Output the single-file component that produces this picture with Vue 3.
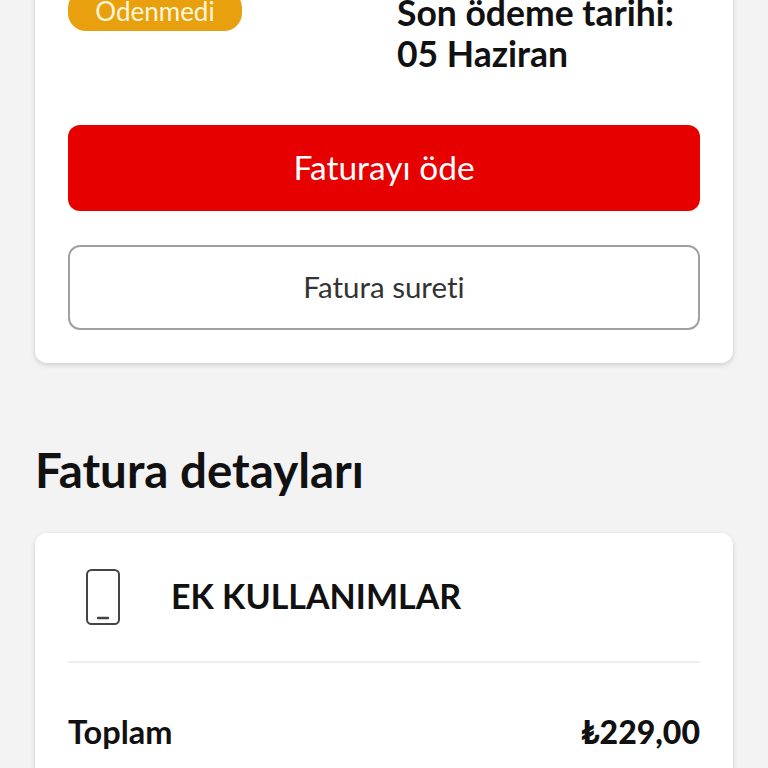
<template>
  <main class="page">
    <section class="card bill-card">
      <div class="bill-top">
        <div class="status-col">
          <span class="status">Ödenmedi</span>
        </div>
        <p class="due">Son ödeme tarihi:<br />05 Haziran</p>
      </div>
      <button class="btn btn-pay" type="button">Faturayı öde</button>
      <button class="btn btn-copy" type="button">Fatura sureti</button>
    </section>

    <h2 class="section-title">Fatura detayları</h2>

    <section class="card detail-card">
      <header class="detail-head">
        <svg class="phone-icon" viewBox="0 0 34 56" fill="none" aria-hidden="true">
          <rect x="1" y="1" width="32" height="54" rx="4.5" stroke="#444" stroke-width="2" />
          <path d="M12 49h10" stroke="#444" stroke-width="2.4" stroke-linecap="round" />
        </svg>
        <h3>EK KULLANIMLAR</h3>
      </header>
      <div class="total-row">
        <span>Toplam</span>
        <strong>{{ total }}</strong>
      </div>
    </section>
  </main>
</template>

<script setup>
const total = '₺229,00'
</script>

<style>
html,
body {
  margin: 0;
  background: #f3f3f3;
}
</style>

<style scoped>
.page {
  box-sizing: border-box;
  height: 768px;
  padding: 0 35px;
  overflow: hidden;
  background: #f3f3f3;
  color: #111;
  font-family: Lato, "Open Sans", "DejaVu Sans", sans-serif;
  font-variant-ligatures: none;
}

.card {
  background: #fff;
  border-radius: 0 0 12px 12px;
  box-shadow: 0 2px 5px rgba(0, 0, 0, 0.16);
}

.bill-card {
  display: flex;
  flex-direction: column;
  height: 373px;
  margin-top: -10px;
  box-sizing: border-box;
  padding: 0 33px;
}

.bill-top {
  display: grid;
  grid-template-columns: 329px 1fr;
  height: 135px;
}

.status {
  display: block;
  width: 174px;
  height: 41px;
  border-radius: 18px;
  background: #e9a00f;
  color: #fff6dc;
  font-size: 26px;
  line-height: 42px;
  text-align: center;
}

.due {
  margin: 0;
  padding-top: 2px;
  font-size: 35.5px;
  font-weight: 700;
  line-height: 41px;
}

.btn {
  display: block;
  width: 100%;
  border-radius: 12px;
  font-family: inherit;
  font-variant-ligatures: none;
  text-align: center;
}

.btn-pay {
  height: 86px;
  padding-bottom: 3px;
  border: none;
  background: #e60000;
  color: #fff;
  font-size: 33.5px;
}

.btn-copy {
  height: 85px;
  margin-top: 34px;
  padding-bottom: 3px;
  border: 2px solid #a0a0a0;
  background: #fff;
  color: #333;
  font-size: 29.5px;
}

.section-title {
  margin: 79px 0 0;
  font-size: 47.5px;
  font-weight: 700;
  line-height: 56px;
}

.detail-card {
  height: 300px;
  margin-top: 35px;
  padding: 0 33px;
  border-radius: 12px;
}

.detail-head {
  display: flex;
  align-items: center;
  height: 128px;
  border-bottom: 2px solid #eeeeee;
}

.phone-icon {
  width: 34px;
  height: 56px;
  margin-left: 18px;
}

.detail-head h3 {
  margin: -3px 0 0 51px;
  font-size: 34px;
  font-weight: 700;
}

.total-row {
  display: flex;
  justify-content: space-between;
  align-items: center;
  margin-top: 49px;
  font-size: 32.5px;
  font-weight: 700;
}

.total-row strong {
  font-size: 32px;
}
</style>
